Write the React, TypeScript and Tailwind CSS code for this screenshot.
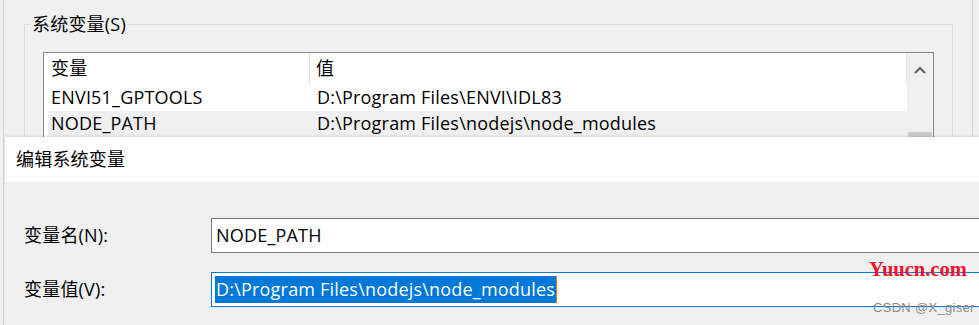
import React from "react";

const font = {
    fontFamily: '"Open Sans", "Noto Sans CJK SC", sans-serif',
};

const rows = [
    { name: "ENVI51_GPTOOLS", value: "D:\\Program Files\\ENVI\\IDL83" },
    { name: "NODE_PATH", value: "D:\\Program Files\\nodejs\\node_modules" },
];

const ChevronUp = () => (
    <svg width="12" height="8" viewBox="0 0 12 8" className="block">
        <path d="M1 7 L6 2 L11 7" fill="none" stroke="#606060" strokeWidth="2" />
    </svg>
);

const App = () => {
    return (
        <div
            className="relative w-[979px] h-[325px] overflow-hidden bg-[#f0f0f0] text-[18px] tracking-[0.2px] text-black"
            style={font}
        >
            {/* background window */}
            <div className="ml-[3px] w-[970px] h-full border-l border-r border-[#d6d6d6] pt-[24px] pl-[20px] pr-[19px]">
                <div className="relative h-[400px] border border-[#dcdcdc] pt-[27px] pl-[18px] pr-[18px]">
                    <span className="absolute -top-[14px] left-[6px] px-[1px] bg-[#f0f0f0] leading-[26px]">
                        系统变量(S)
                    </span>
                    <div className="flex h-[200px] border border-[#828790] bg-white">
                        <div className="flex-1 flex flex-col">
                            <div className="flex h-[32px]">
                                <div className="w-[266px] pl-[7px] pt-[2px] leading-[26px] border-r border-[#e5e5e5]">
                                    变量
                                </div>
                                <div className="flex-1 pl-[6px] pt-[2px] leading-[26px] border-r border-[#e5e5e5]">
                                    值
                                </div>
                            </div>
                            {rows.map((r, i) => (
                                <div
                                    key={r.name}
                                    className={
                                        "flex h-[26px] ml-[4px] leading-[24px] " +
                                        (i === 1 ? "bg-[#f0f0f0]" : "")
                                    }
                                >
                                    <div className="w-[262px] pl-[3px] whitespace-nowrap">
                                        {r.name}
                                    </div>
                                    <div className="flex-1 pl-[7px] whitespace-nowrap">
                                        {r.value}
                                    </div>
                                </div>
                            ))}
                        </div>
                        <div className="w-[26px] bg-[#f0f0f0] flex flex-col items-center">
                            <div className="h-[32px] flex items-center pt-[2px]">
                                <ChevronUp />
                            </div>
                            <div className="h-[47px]" />
                            <div className="w-[24px] h-[10px] bg-[#cdcdcd]" />
                        </div>
                    </div>
                </div>
            </div>

            {/* dialog on top */}
            <div className="absolute left-[5px] top-[137px] right-0 bottom-0 bg-[#f0f0f0] shadow-[0_-1px_3px_rgba(0,0,0,0.12)]">
                <div className="h-[45px] bg-white flex items-center pl-[11px]">
                    编辑系统变量
                </div>
                <div className="pt-[36px] pl-[19px] flex flex-col gap-[19px]">
                    <div className="flex items-center">
                        <div className="w-[187px]">变量名(N):</div>
                        <div className="flex-1 h-[35px] border border-[#7a7a7a] border-r-0 bg-white flex items-center pl-[4px] whitespace-nowrap">
                            NODE_PATH
                        </div>
                    </div>
                    <div className="flex items-center">
                        <div className="w-[187px]">变量值(V):</div>
                        <div className="flex-1 h-[35px] border border-[#0078d7] border-r-0 bg-white flex items-center pl-[3px] whitespace-nowrap">
                            <span className="bg-[#0078d7] text-white leading-[27px] pl-[1px] pr-[1px]">
                                D:\Program Files\nodejs\node_modules
                            </span>
                            <span className="w-[1px] h-[27px] bg-[#e07b2a]" />
                        </div>
                    </div>
                </div>
            </div>

            {/* watermarks */}
            <div
                className="absolute left-[869px] top-[257px] text-[20.5px] font-bold tracking-normal text-[#f2122e] leading-[24px]"
                style={{ fontFamily: '"Liberation Serif", serif' }}
            >
                Yuucn.com
            </div>
            <div
                className="absolute left-[873px] top-[300px] text-[13px] tracking-[0.3px] text-[#8c8c8c] leading-[16px]"
                style={{ fontFamily: '"Liberation Sans", sans-serif' }}
            >
                CSDN @X_giser
            </div>
        </div>
    );
};

export default App;
